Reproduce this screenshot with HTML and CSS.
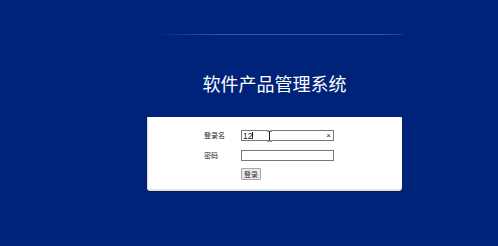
FILE: index.html
```html
<!DOCTYPE html>
<html lang="zh-CN">
<head>
    <meta charset="UTF-8">
    <meta name="viewport" content="width=device-width, initial-scale=1.0">
    <title>软件产品管理系统</title>
    <link rel="stylesheet" href="styles.css">
</head>
<body>
    <div class="page">
        <div class="rule"></div>

        <h1 class="title">软件产品管理系统</h1>

        <div class="login-box">
            <div class="row">
                <label class="label">登录名</label>
                <div class="field">
                    <input type="text" class="input" value="12">
                    <span class="caret"></span>
                    <span class="clear">&times;</span>
                    <!-- cursor del raton -->
                    <svg class="ibeam" width="7" height="12" viewBox="0 0 7 12">
                        <path d="M1 1h2l.5.5.5-.5h2M3.5 1.5v9M1 11h2l.5-.5.5.5h2" fill="none" stroke="#fff" stroke-width="2.2"/>
                        <path d="M1 1h2l.5.5.5-.5h2M3.5 1.5v9M1 11h2l.5-.5.5.5h2" fill="none" stroke="#000" stroke-width="0.9"/>
                    </svg>
                </div>
            </div>
            <div class="row">
                <label class="label">密码</label>
                <div class="field">
                    <input type="password" class="input">
                </div>
            </div>
            <div class="row row-btn">
                <span class="label"></span>
                <button class="btn">登录</button>
            </div>
        </div>
    </div>
</body>
</html>
```

FILE: styles.css
```css
body {
    margin: 0;
    background: #00237a;
    font-family: 'Noto Sans CJK SC', 'Noto Sans', sans-serif;
    color: #333;
}

.page {
    width: 498px;
    height: 246px;
    overflow: hidden;
    padding-top: 34px;
    box-sizing: border-box;
}

.rule {
    width: 243px;
    height: 1px;
    margin-left: 160px;
    background: linear-gradient(90deg, rgba(120, 150, 220, 0.05), rgba(120, 150, 220, 0.45) 25%, rgba(120, 150, 220, 0.45) 90%, rgba(120, 150, 220, 0.2));
}

.title {
    width: 255px;
    margin: 36px 0 0 147px;
    height: 46px;
    font-size: 18px;
    line-height: 24px;
    font-weight: normal;
    color: #fff;
    text-align: center;
}

.login-box {
    width: 255px;
    height: 74px;
    margin-left: 147px;
    padding: 13px 0 0 57px;
    box-sizing: border-box;
    background: #fff;
    border-radius: 1px 1px 4px 4px;
    box-shadow: inset 0 -2px 0 #e2e2e2, inset 1px 0 0 #d8d8e0, 0 1px 2px rgba(0, 0, 0, 0.4);
    display: flex;
    flex-direction: column;
    gap: 9px;
}

.row {
    display: flex;
    align-items: center;
    height: 11px;
}

.row-btn {
    height: 12px;
    margin-top: -2px;
}

.label {
    width: 37px;
    font-size: 7px;
    line-height: 11px;
    color: #222;
}

.field {
    position: relative;
    width: 93px;
    height: 11px;
}

.input {
    display: block;
    width: 93px;
    height: 11px;
    margin: 0;
    padding: 0 1px;
    box-sizing: border-box;
    border: 1px solid #767676;
    font-family: 'Liberation Sans', Arial, sans-serif;
    font-size: 8.5px;
    line-height: 9px;
    color: #222;
    outline: none;
}

.caret {
    position: absolute;
    left: 11px;
    top: 2px;
    width: 1px;
    height: 7px;
    background: #222;
}

.clear {
    position: absolute;
    right: 3px;
    top: 0;
    font-family: 'Liberation Sans', Arial, sans-serif;
    font-size: 8px;
    line-height: 11px;
    color: #222;
}

.ibeam {
    position: absolute;
    left: 25px;
    top: 0;
}

.btn {
    width: 20px;
    height: 12px;
    margin: 0;
    padding: 0;
    border: 1px solid #a8a8a8;
    border-radius: 1px;
    background: #e9e9e9;
    font-family: 'Noto Sans CJK SC', sans-serif;
    font-size: 7px;
    line-height: 10px;
    color: #333;
}
```
